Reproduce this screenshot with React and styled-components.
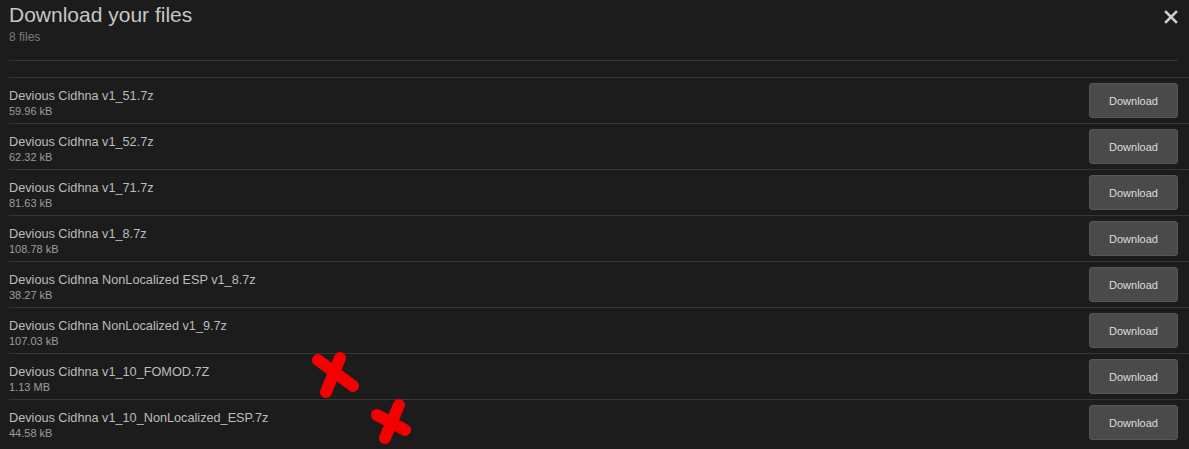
import React from "react";
import styled, { createGlobalStyle } from "styled-components";

const GlobalStyle = createGlobalStyle`
  html, body {
    margin: 0;
    padding: 0;
    background: #1c1c1c;
    font-family: "Liberation Sans", Arial, sans-serif;
  }
`;

const files = [
  { name: "Devious Cidhna v1_51.7z", size: "59.96 kB" },
  { name: "Devious Cidhna v1_52.7z", size: "62.32 kB" },
  { name: "Devious Cidhna v1_71.7z", size: "81.63 kB" },
  { name: "Devious Cidhna v1_8.7z", size: "108.78 kB" },
  { name: "Devious Cidhna NonLocalized ESP v1_8.7z", size: "38.27 kB" },
  { name: "Devious Cidhna NonLocalized v1_9.7z", size: "107.03 kB" },
  {
    name: "Devious Cidhna v1_10_FOMOD.7Z",
    size: "1.13 MB",
    mark: { left: 296, top: -3, w: 60, h: 50, a: [13, 9, 48, 35], b: [35, 7, 21, 41] },
  },
  {
    name: "Devious Cidhna v1_10_NonLocalized_ESP.7z",
    size: "44.58 kB",
    mark: { left: 356, top: -1, w: 55, h: 45, a: [12, 16, 40, 31], b: [34, 6, 20, 39] },
  },
];

const Page = styled.div`
  width: 1189px;
  height: 449px;
  overflow: hidden;
  background: #1c1c1c;
`;

const Header = styled.header`
  display: flex;
  justify-content: space-between;
  align-items: flex-start;
  padding: 3px 11px 0 9px;
`;

const Titles = styled.div`
  display: flex;
  flex-direction: column;
`;

const Title = styled.h1`
  margin: 0;
  font-size: 21px;
  line-height: 24px;
  font-weight: normal;
  color: #c6c6c6;
`;

const Count = styled.div`
  margin-top: 3px;
  font-size: 12px;
  line-height: 14px;
  color: #7c7c7c;
`;

const CloseButton = styled.button`
  display: flex;
  padding: 0;
  margin-top: 7px;
  border: 0;
  background: none;
  cursor: pointer;
`;

const Divider = styled.hr`
  margin: 16px 11px 16px 9px;
  border: 0;
  border-top: 1px solid #363636;
`;

const List = styled.ul`
  list-style: none;
  margin: 0 0 0 9px;
  padding: 0;
`;

const Row = styled.li`
  position: relative;
  display: flex;
  align-items: center;
  justify-content: space-between;
  height: 45px;
  padding-right: 11px;
  border-top: 1px solid #363636;
`;

const Info = styled.div`
  display: flex;
  flex-direction: column;
  align-self: flex-start;
  padding-top: 10px;
`;

const FileName = styled.div`
  font-size: 12.7px;
  line-height: 16px;
  color: #bdbdbd;
`;

const FileSize = styled.div`
  margin-top: 0;
  font-size: 11px;
  line-height: 14px;
  color: #9c9c9c;
`;

const DownloadButton = styled.button`
  width: 89px;
  height: 35px;
  border: 1px solid #565656;
  border-radius: 3px;
  background: #4a4a4a;
  color: #dedede;
  font-family: "Liberation Sans", Arial, sans-serif;
  font-size: 11px;
  cursor: pointer;
`;

const Scribble = styled.svg`
  position: absolute;
  left: ${(p) => p.$left}px;
  top: ${(p) => p.$top}px;
  pointer-events: none;
  overflow: visible;
`;

function CrossMark({ mark }) {
  const { left, top, w, h, a, b } = mark;
  return (
    <Scribble $left={left} $top={top} width={w} height={h} viewBox={`0 0 ${w} ${h}`}>
      <g stroke="#f40000" strokeWidth="12" strokeLinecap="round" fill="none">
        <line x1={a[0]} y1={a[1]} x2={a[2]} y2={a[3]} />
        <line x1={b[0]} y1={b[1]} x2={b[2]} y2={b[3]} />
      </g>
    </Scribble>
  );
}

function CloseIcon() {
  return (
    <svg width="14" height="14" viewBox="0 0 14 14">
      <g stroke="#cfcfcf" strokeWidth="2.6" strokeLinecap="square">
        <line x1="2" y1="2" x2="12" y2="12" />
        <line x1="12" y1="2" x2="2" y2="12" />
      </g>
    </svg>
  );
}

export default function App() {
  return (
    <>
      <GlobalStyle />
      <Page>
        <Header>
          <Titles>
            <Title>Download your files</Title>
            <Count>{files.length} files</Count>
          </Titles>
          <CloseButton aria-label="Close">
            <CloseIcon />
          </CloseButton>
        </Header>
        <Divider />
        <List>
          {files.map((f) => (
            <Row key={f.name}>
              <Info>
                <FileName>{f.name}</FileName>
                <FileSize>{f.size}</FileSize>
              </Info>
              <DownloadButton>Download</DownloadButton>
              {f.mark && <CrossMark mark={f.mark} />}
            </Row>
          ))}
        </List>
      </Page>
    </>
  );
}
